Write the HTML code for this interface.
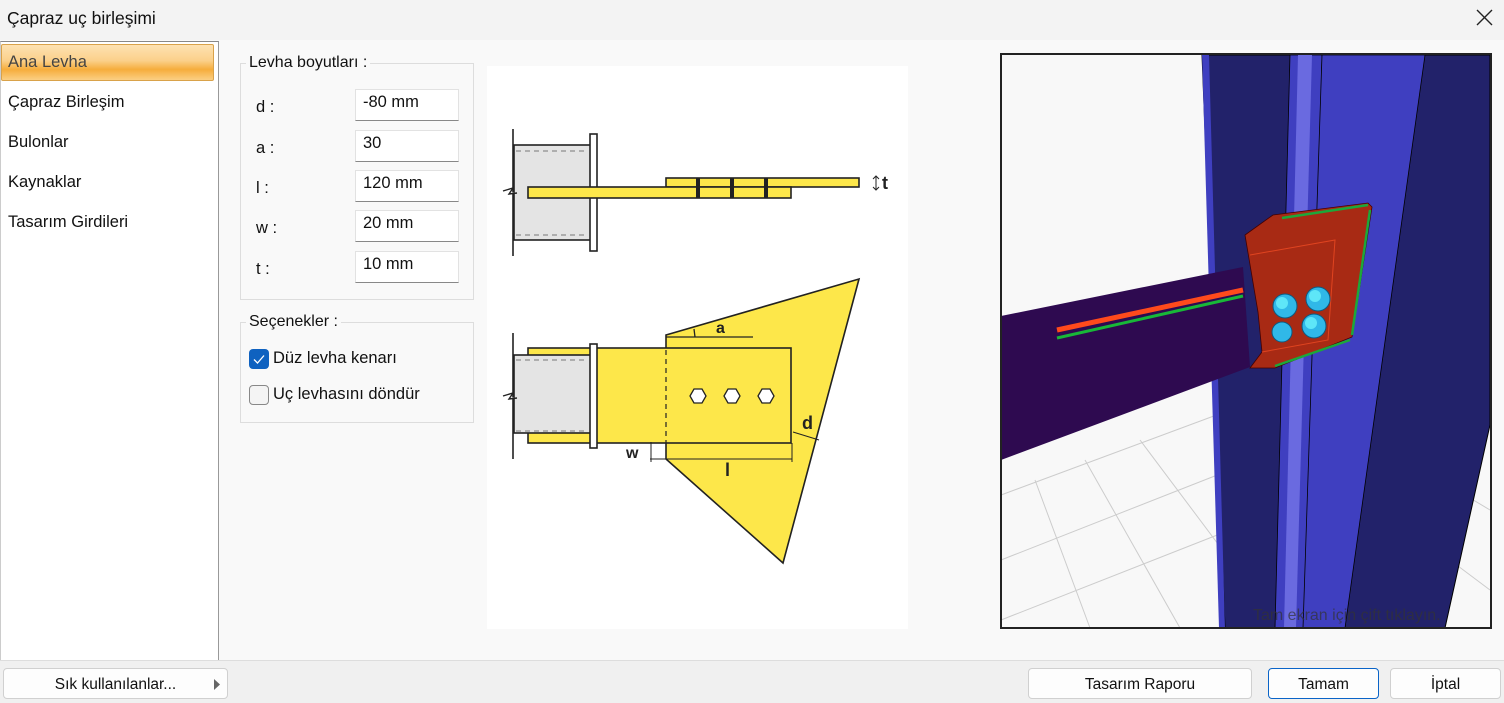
<!DOCTYPE html>
<html><head><meta charset="utf-8"><style>
*{box-sizing:border-box;margin:0;padding:0}
body{width:1504px;height:703px;position:relative;overflow:hidden;background:#f9f9f9;font-family:"Segoe UI","Liberation Sans","DejaVu Sans",sans-serif;font-size:16px;color:#111}
.abs{position:absolute}
#title{left:0;top:0;width:1504px;height:40px;background:#f3f3f3}
#title span{position:absolute;left:7px;top:8px;font-size:17.5px}
#left{left:0;top:41px;width:219px;height:619px;background:#fff;border-top:1px solid #888;border-right:1px solid #999;border-left:1px solid #ccc}
.it{position:absolute;left:8px;font-size:16.5px}
#sel{left:1px;top:44px;width:213px;height:37px;border:1px solid #d9a24a;border-radius:2px;background:linear-gradient(#fde2b2 0%,#fbd08a 45%,#f6ad3c 70%,#fbcf83 100%)}
.grp{border:1px solid #ddd;position:absolute}
.lg{position:absolute;background:#f9f9f9;padding:0 3px;font-size:16px}
.lbl{position:absolute;left:256px;font-size:16.5px}
.inp{position:absolute;left:355px;width:104px;height:32px;background:#fff;border:1px solid #e2e2e2;border-bottom:1px solid #888;padding:3px 0 0 7px;font-size:16.5px}
#bot{left:0;top:660px;width:1504px;height:43px;background:#f0f0f0;border-top:1px solid #ddd}
.btn{position:absolute;top:668px;height:31px;background:#fdfdfd;border:1px solid #d0d0d0;border-radius:4px;text-align:center;line-height:31px;font-size:15.5px}
</style></head><body>
<div id="title" class="abs"><span>Çapraz uç birleşimi</span>
<svg class="abs" style="left:1476px;top:9px" width="17" height="17"><path d="M1 1L16 16M16 1L1 16" stroke="#222" stroke-width="1.4"/></svg></div>
<div id="left" class="abs"></div>
<div id="sel" class="abs"></div>
<div class="it" style="top:53px;color:#444">Ana Levha</div>
<div class="it" style="top:93px">Çapraz Birleşim</div>
<div class="it" style="top:133px">Bulonlar</div>
<div class="it" style="top:173px">Kaynaklar</div>
<div class="it" style="top:213px">Tasarım Girdileri</div>

<div class="grp" style="left:240px;top:63px;width:234px;height:237px"></div>
<div class="lg" style="left:246px;top:54px">Levha boyutları :</div>
<div class="lbl" style="top:98px">d :</div><div class="inp" style="top:89px">-80 mm</div>
<div class="lbl" style="top:139px">a :</div><div class="inp" style="top:130px">30</div>
<div class="lbl" style="top:179px">l :</div><div class="inp" style="top:170px">120 mm</div>
<div class="lbl" style="top:219px">w :</div><div class="inp" style="top:210px">20 mm</div>
<div class="lbl" style="top:260px">t :</div><div class="inp" style="top:251px">10 mm</div>

<div class="grp" style="left:240px;top:322px;width:234px;height:101px"></div>
<div class="lg" style="left:246px;top:313px">Seçenekler :</div>
<div class="abs" style="left:249px;top:349px;width:20px;height:20px;background:#0f62c0;border-radius:4px"><svg width="20" height="20"><path d="M5 10.5L8.5 14L15 6.5" stroke="#fff" stroke-width="1.3" fill="none"/></svg></div>
<div class="abs" style="left:273px;top:349px;font-size:16.5px">Düz levha kenarı</div>
<div class="abs" style="left:249px;top:385px;width:20px;height:20px;background:#f4f4f4;border:1px solid #888;border-radius:4px"></div>
<div class="abs" style="left:273px;top:385px;font-size:16.5px">Uç levhasını döndür</div>

<svg class="abs" style="left:487px;top:66px" width="421" height="563" viewBox="487 66 421 563">
<rect x="487" y="66" width="421" height="563" fill="#fff"/>
<g stroke="#222" stroke-width="1.6">
<path d="M513 129V256" fill="none"/>
<rect x="514" y="145" width="77" height="95" fill="#e4e4e4"/>
<path d="M516 151H588M516 235H588" stroke="#777" stroke-dasharray="5 4" stroke-width="1"/>
<path d="M503 191l10-3-4 6 8-1" fill="#fff" stroke-width="1.4"/>
<rect x="590" y="134" width="7" height="117" fill="#fff"/>
<rect x="666" y="178" width="193" height="9" fill="#fde74a"/>
<rect x="528" y="187" width="263" height="11" fill="#fde74a"/>
<path d="M698 178V198M732 178V198M766 178V198" stroke-width="4"/>
<path d="M876 176V190M873 179l3-3 3 3M873 187l3 3 3-3" stroke-width="1" fill="none"/>
<path d="M513 333V459" fill="none"/>
<polygon points="666,335 859,279 783,563 666,459" fill="#fde74a"/>
<rect x="528" y="348" width="63" height="95" fill="#fde74a"/>
<rect x="514" y="355" width="77" height="78" fill="#e4e4e4"/>
<path d="M516 360H588M516 431H588" stroke="#777" stroke-dasharray="5 4" stroke-width="1"/>
<path d="M503 396l10-3-4 6 8-1" fill="#fff" stroke-width="1.4"/>
<rect x="596" y="348" width="195" height="95" fill="#fde74a"/>
<rect x="590" y="344" width="7" height="104" fill="#fff"/>
<path d="M666 350V443" stroke-dasharray="5 4" stroke-width="1.2"/>
<path d="M666 337H753M695 337l-1-8" stroke-width="1.3" fill="none"/>
<g fill="#fff" stroke-width="1.3"><polygon points="690,396 694,389 702,389 706,396 702,403 694,403"/><polygon points="724,396 728,389 736,389 740,396 736,403 728,403"/><polygon points="758,396 762,389 770,389 774,396 770,403 762,403"/></g>
<path d="M650 459H792M651 442V462M792 443V462M793 432l26 8" stroke-width="1" fill="none"/>
</g>
<g font-family="Liberation Sans,sans-serif" font-size="18" fill="#222" font-weight="bold"><text x="882" y="189">t</text><text x="716" y="333" font-size="16">a</text><text x="802" y="429">d</text><text x="626" y="458" font-size="16">w</text><text x="725" y="476">l</text></g>
</svg>

<svg class="abs" style="left:1000px;top:53px" width="492" height="576" viewBox="1000 53 492 576">
<rect x="1000" y="53" width="492" height="576" fill="#f8f8f8"/>
<g stroke="#ccc" stroke-width="1" fill="none"><path d="M1001 495L1230 410M1001 560L1230 470M1001 620L1230 530M1035 480L1090 628M1085 460L1180 628M1140 440L1230 560M1440 480L1490 510M1450 560L1490 590"/></g>
<polygon points="1202,55 1490,55 1490,425 1445,628 1225,628" fill="#22226a" stroke="#000" stroke-width="1"/>
<polygon points="1202,55 1209,55 1225,628 1219,628" fill="#3f3fc0"/>
<polygon points="1290,55 1322,55 1310,628 1275,628" fill="#3f3fc0" stroke="#000" stroke-width="0.8"/>
<polygon points="1298,55 1312,55 1296,628 1284,628" fill="#6a6ae0"/>
<polygon points="1322,55 1425,55 1345,628 1303,628" fill="#3f3fc0" stroke="#000" stroke-width="0.8"/>
<polygon points="1001,316 1243,267 1250,367 1001,460" fill="#2e0a50"/>
<polygon points="1245,235 1273,215 1368,203 1372,207 1352,337 1275,368 1250,368 1262,352 1258,312" fill="#a82a14" stroke="#400" stroke-width="0.8"/>
<path d="M1057 330L1243 290" stroke="#ff4a1c" stroke-width="5"/>
<path d="M1057 338L1243 296" stroke="#18b838" stroke-width="3"/>
<path d="M1282 218L1368 205M1370 210L1352 335M1275 366L1350 340" stroke="#1ca83a" stroke-width="2.5"/>
<path d="M1250 255L1335 240L1328 340L1262 352" stroke="#e04420" stroke-width="1" fill="none"/>
<g fill="#30b8e8" stroke="#0d5a80" stroke-width="1"><circle cx="1285" cy="306" r="12"/><circle cx="1318" cy="299" r="12"/><circle cx="1282" cy="332" r="10"/><circle cx="1314" cy="326" r="12"/></g>
<g fill="#5ee6f8"><circle cx="1282" cy="303" r="6"/><circle cx="1315" cy="296" r="6"/><circle cx="1311" cy="323" r="6"/></g>
<text x="1253" y="620" font-family="Liberation Sans,sans-serif" font-size="16" fill="#333" fill-opacity="0.7">Tam ekran için çift tıklayın.</text>
<rect x="1001" y="54" width="490" height="574" fill="none" stroke="#222" stroke-width="2"/>
</svg>

<div id="bot" class="abs"></div>
<div class="btn" style="left:3px;width:225px">Sık kullanılanlar...<svg class="abs" style="left:209px;top:10px" width="8" height="11"><path d="M1 0L7 5.5L1 11Z" fill="#666"/></svg></div>
<div class="btn" style="left:1028px;width:224px">Tasarım Raporu</div>
<div class="btn" style="left:1268px;width:111px;border:1px solid #0a64c8">Tamam</div>
<div class="btn" style="left:1390px;width:111px">İptal</div>
</body></html>
